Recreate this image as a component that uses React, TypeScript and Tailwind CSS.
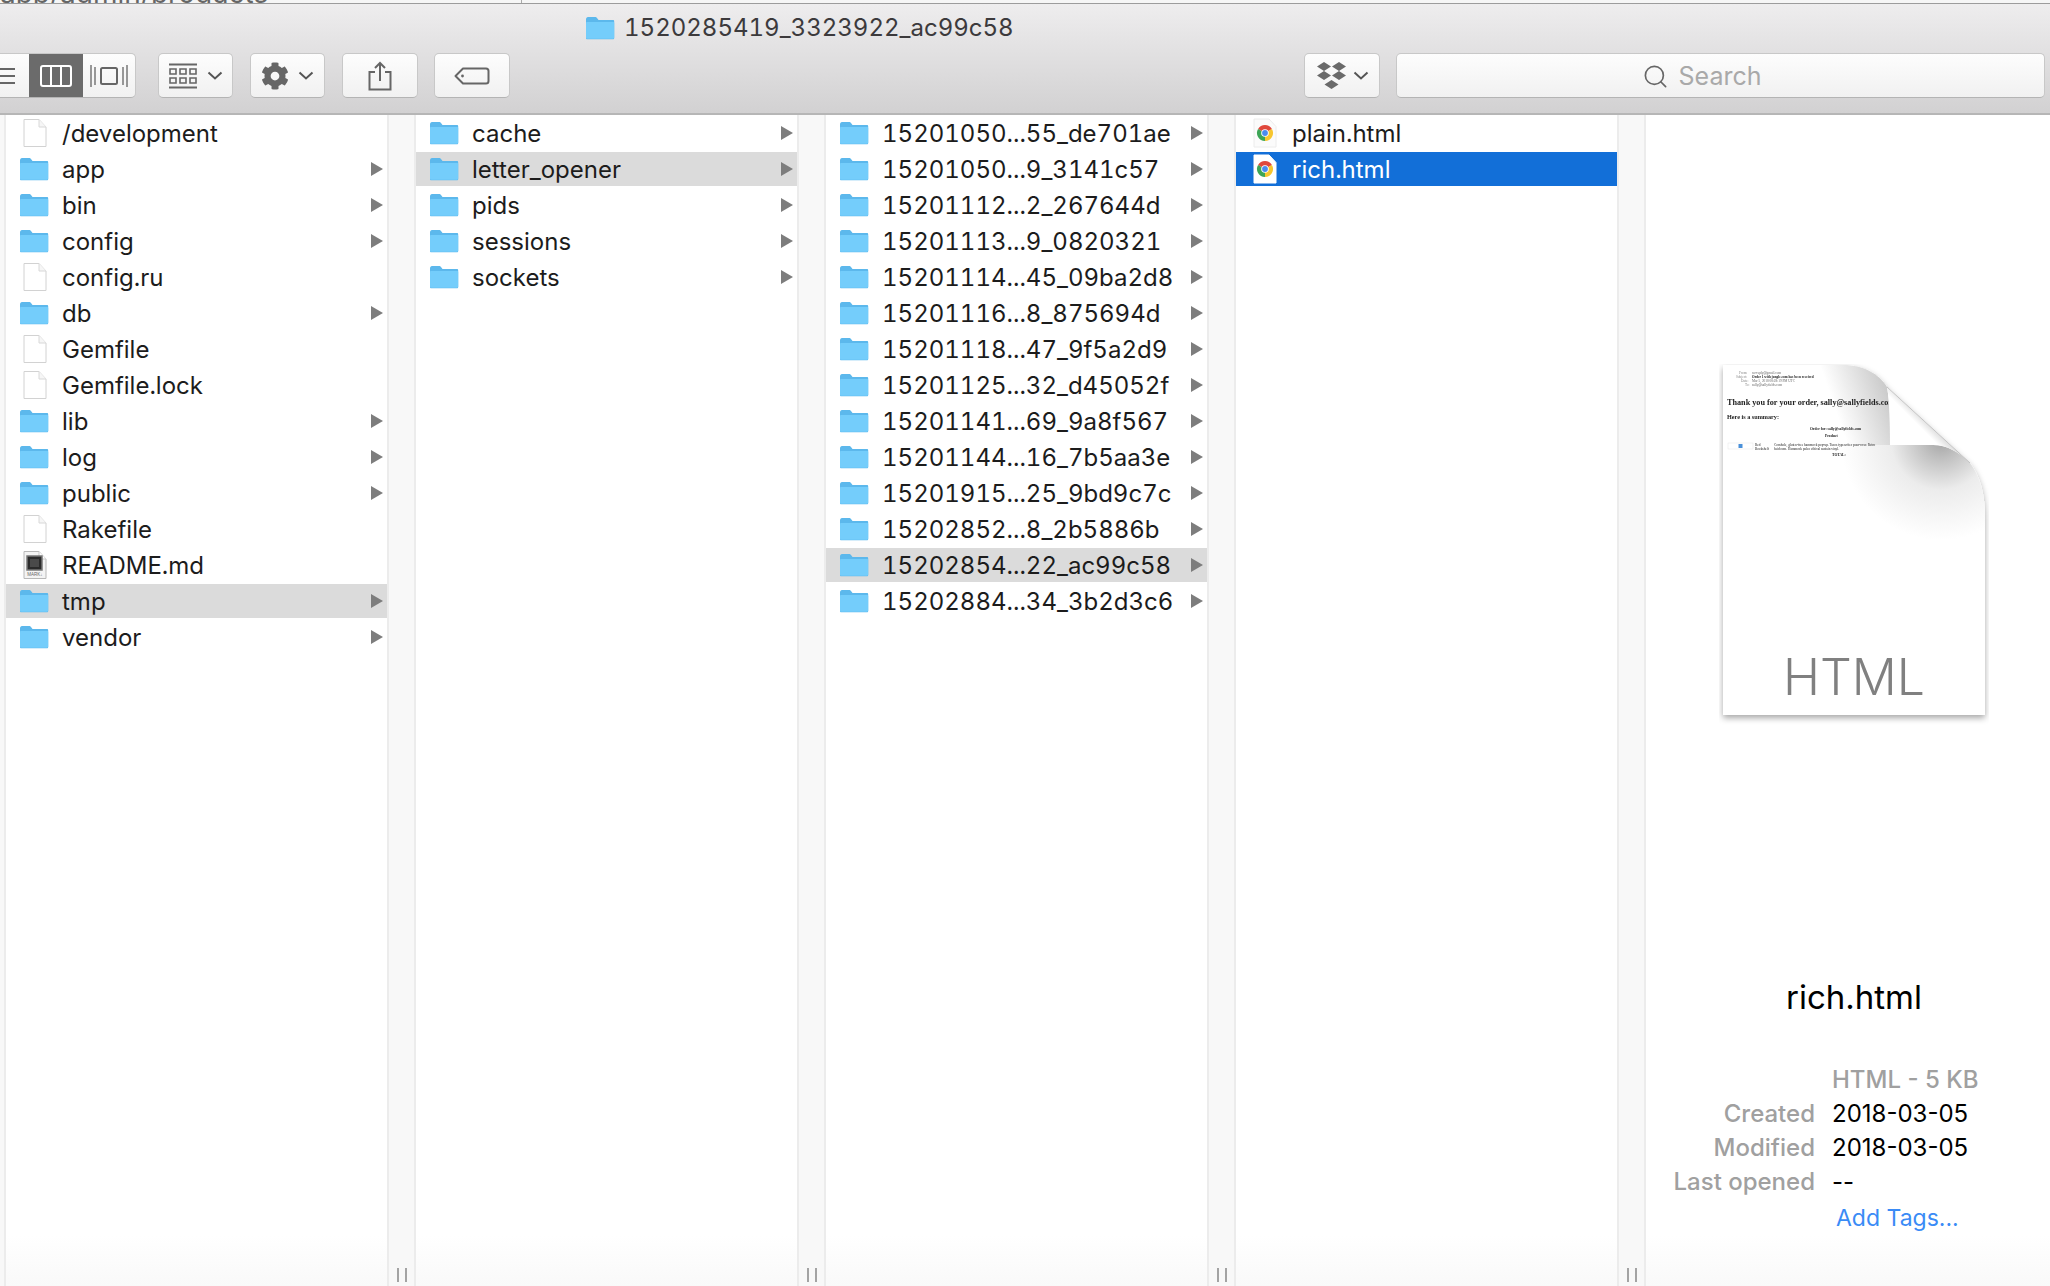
import type { ReactNode } from "react";
import { Search } from "lucide-react";
import { FaCog } from "react-icons/fa";

type Kind = "folder" | "file" | "readme" | "chrome";

interface Entry {
  name: string;
  kind: Kind;
  active?: "gray" | "blue";
}

const COL_ROOT: Entry[] = [
  { name: "/development", kind: "file" },
  { name: "app", kind: "folder" },
  { name: "bin", kind: "folder" },
  { name: "config", kind: "folder" },
  { name: "config.ru", kind: "file" },
  { name: "db", kind: "folder" },
  { name: "Gemfile", kind: "file" },
  { name: "Gemfile.lock", kind: "file" },
  { name: "lib", kind: "folder" },
  { name: "log", kind: "folder" },
  { name: "public", kind: "folder" },
  { name: "Rakefile", kind: "file" },
  { name: "README.md", kind: "readme" },
  { name: "tmp", kind: "folder", active: "gray" },
  { name: "vendor", kind: "folder" },
];

const COL_TMP: Entry[] = [
  { name: "cache", kind: "folder" },
  { name: "letter_opener", kind: "folder", active: "gray" },
  { name: "pids", kind: "folder" },
  { name: "sessions", kind: "folder" },
  { name: "sockets", kind: "folder" },
];

const COL_LETTERS: Entry[] = [
  { name: "15201050...55_de701ae", kind: "folder" },
  { name: "15201050...9_3141c57", kind: "folder" },
  { name: "15201112...2_267644d", kind: "folder" },
  { name: "15201113...9_0820321", kind: "folder" },
  { name: "15201114...45_09ba2d8", kind: "folder" },
  { name: "15201116...8_875694d", kind: "folder" },
  { name: "15201118...47_9f5a2d9", kind: "folder" },
  { name: "15201125...32_d45052f", kind: "folder" },
  { name: "15201141...69_9a8f567", kind: "folder" },
  { name: "15201144...16_7b5aa3e", kind: "folder" },
  { name: "15201915...25_9bd9c7c", kind: "folder" },
  { name: "15202852...8_2b5886b", kind: "folder" },
  { name: "15202854...22_ac99c58", kind: "folder", active: "gray" },
  { name: "15202884...34_3b2d3c6", kind: "folder" },
];

const COL_FILES: Entry[] = [
  { name: "plain.html", kind: "chrome" },
  { name: "rich.html", kind: "chrome", active: "blue" },
];

function FolderIcon({ className }: { className?: string }) {
  return (
    <svg viewBox="0 0 30 24" className={className}>
      <path d="M1 3.5C1 2 1.8 1 3 1h7c1 0 1.6.5 2.2 1.2L13.5 4H28c.7 0 1.2.5 1.2 1.2V22c0 .8-.5 1.3-1.2 1.3H2.2C1.5 23.3 1 22.8 1 22Z" fill="#5cb8ec" />
      <path d="M1 7.2C1 6.5 1.5 6 2.2 6H28c.7 0 1.2.5 1.2 1.2V21.5c0 .7-.5 1.2-1.2 1.2H2.2c-.7 0-1.2-.5-1.2-1.2Z" fill="#74cdfb" />
    </svg>
  );
}

function FileIcon() {
  return (
    <svg viewBox="0 0 24 30" className="w-6 h-[30px] shrink-0">
      <path d="M1 1.5h15l7 7.5v19.5H1Z" fill="#fff" stroke="#d2d2d2" strokeWidth="1" strokeLinejoin="round" />
      <path d="M16 1.5V9h7" fill="#f6f6f6" stroke="#d8d8d8" strokeWidth="1" />
    </svg>
  );
}

function ReadmeIcon() {
  return (
    <svg viewBox="0 0 24 30" className="w-6 h-[30px] shrink-0">
      <path d="M1 1.5h15l7 7.5v19.5H1Z" fill="#f4f4f4" stroke="#b8b8b8" strokeWidth="1" />
      <path d="M16 1.5V9h7" fill="#fff" stroke="#c8c8c8" strokeWidth="1" />
      <rect x="4" y="6" width="15" height="14" fill="#2b2b2b" stroke="#777" strokeWidth="1.5" />
      <rect x="7" y="9" width="9" height="8" fill="#4a4a4a" />
      <text x="12" y="26" textAnchor="middle" fontSize="4.5" fill="#666" fontFamily="Liberation Sans, sans-serif">MARK↓</text>
    </svg>
  );
}

function ChromeIcon({ selected }: { selected?: boolean }) {
  return (
    <svg viewBox="0 0 24 30" className="w-6 h-[30px] shrink-0">
      <path d="M1 1h15l7 7.5V29H1Z" fill={selected ? "#fff" : "#fbfbfb"} stroke={selected ? "#fff" : "#ececec"} strokeWidth="1" />
      <g transform="translate(12 15)">
        <path d="M0-8A8 8 0 0 1 6.93-4L0 0-6.93-4A8 8 0 0 1 0-8Z" fill="#e0483c" />
        <path d="M6.93-4A8 8 0 0 1 0 8L0 0Z" fill="#f7c62f" />
        <path d="M0 8A8 8 0 0 1-6.93-4L0 0Z" fill="#3da556" />
        <circle r="3.8" fill="#fff" />
        <circle r="2.9" fill="#4a8bf0" />
      </g>
    </svg>
  );
}

function Arrow() {
  return (
    <svg viewBox="0 0 12 14" className="w-3 h-3.5 shrink-0">
      <path d="M0 0 12 7 0 14Z" fill="#7d7d7d" />
    </svg>
  );
}

function Row({ entry }: { entry: Entry }) {
  const bg =
    entry.active === "blue"
      ? "bg-[#126fd8] text-white"
      : entry.active === "gray"
        ? "bg-[#dbdbdb] text-[#1c1c1c]"
        : "text-[#1c1c1c]";
  const isFolder = entry.kind === "folder";

  return (
    <div className={`flex items-center h-[34px] pr-[4px] ${bg}`}>
      <div className="w-[56px] shrink-0 flex justify-center pl-[2px]">
        {isFolder && <FolderIcon className="w-[30px] h-6 shrink-0 ml-[-2px]" />}
        {entry.kind === "file" && <FileIcon />}
        {entry.kind === "readme" && <ReadmeIcon />}
        {entry.kind === "chrome" && <ChromeIcon selected={entry.active === "blue"} />}
      </div>
      <span className="flex-1 pt-[1px] text-[24px] leading-none whitespace-nowrap tabular-nums">{entry.name}</span>
      {isFolder && <Arrow />}
    </div>
  );
}

function Column({ items }: { items: Entry[] }) {
  return (
    <div className="w-[381px] shrink-0 flex flex-col gap-[2px] pt-[1px] bg-[linear-gradient(to_bottom,#ffffff_calc(100%-50px),#f9f9f9)]">
      {items.map((item) => (
        <Row key={item.name} entry={item} />
      ))}
    </div>
  );
}

function Gutter() {
  return (
    <div className="w-[29px] shrink-0 flex items-end justify-center gap-[6px] pb-[4px] bg-[#f8f8f8] border-x-2 border-[#ececec]">
      <div className="w-[2px] h-[14px] bg-[#a3a3a3]" />
      <div className="w-[2px] h-[14px] bg-[#a3a3a3]" />
    </div>
  );
}

function ToolButton({ children, className }: { children: ReactNode; className?: string }) {
  return (
    <div className={`h-[45px] flex items-center justify-center rounded-[5px] bg-[linear-gradient(to_bottom,#fdfdfd,#f1f1f1)] border border-[#c8c8c8] border-b-[#b4b4b4] ${className ?? ""}`}>
      {children}
    </div>
  );
}

function Chevron() {
  return (
    <svg viewBox="0 0 16 9" className="w-4 h-[9px]">
      <path d="M1.5 1.5 8 7.5l6.5-6" fill="none" stroke="#555" strokeWidth="2" />
    </svg>
  );
}

function Toolbar() {
  return (
    <div className="h-[112px] shrink-0 flex flex-col bg-[linear-gradient(to_bottom,#eeedee,#d2d1d2)] border-t border-[#9c9c9c] border-b-2 border-b-[#b6b6b6]">
      <div className="h-[49px] shrink-0 flex items-center pl-[585px] gap-[9px] pb-[1px]">
        <FolderIcon className="w-[30px] h-6 shrink-0" />
        <span className="text-[24px] leading-none text-[#3c3a3c] tabular-nums">1520285419_3323922_ac99c58</span>
      </div>
      <div className="flex items-center ml-[-26px] pr-[5px]">
        <ToolButton className="w-[162px] justify-start overflow-hidden mr-[22px]">
          <div className="w-[54px] h-full flex items-center justify-end pr-[14px]">
            <svg viewBox="0 0 20 20" className="w-5 h-5">
              <path d="M0 3h20M0 10h20M0 17h20" stroke="#666" strokeWidth="2" />
            </svg>
          </div>
          <div className="w-[54px] h-full bg-[#6b6b6b] flex items-center justify-center">
            <svg viewBox="0 0 32 22" className="w-8 h-[22px]">
              <rect x="1" y="1" width="30" height="20" rx="2" fill="none" stroke="#fff" strokeWidth="2" />
              <path d="M11 1v20M21 1v20" stroke="#fff" strokeWidth="2" />
            </svg>
          </div>
          <div className="flex-1 flex items-center justify-center">
            <svg viewBox="0 0 38 24" className="w-[38px] h-6">
              <rect x="11" y="4" width="16" height="16" rx="1.5" fill="none" stroke="#666" strokeWidth="2" />
              <path d="M1 1v22M5 3v18M33 3v18M37 1v22" stroke="#777" strokeWidth="1.5" />
            </svg>
          </div>
        </ToolButton>
        <ToolButton className="w-[75px] gap-[10px] mr-[17px]">
          <svg viewBox="0 0 28 26" className="w-7 h-[26px]">
            <path d="M0 1.5h28M0 24.5h28" stroke="#666" strokeWidth="2" />
            <path d="M1 6h6v5H1ZM11 6h6v5h-6ZM21 6h6v5h-6ZM1 15h6v5H1ZM11 15h6v5h-6ZM21 15h6v5h-6Z" fill="none" stroke="#666" strokeWidth="1.6" />
          </svg>
          <Chevron />
        </ToolButton>
        <ToolButton className="w-[75px] gap-[9px] mr-[17px]">
          <FaCog className="w-[28px] h-[28px] text-[#666]" />
          <Chevron />
        </ToolButton>
        <ToolButton className="w-[76px] mr-[16px]">
          <svg viewBox="0 0 24 30" className="w-6 h-[30px]">
            <path d="M7 11H1.5v17.5h21V11H17" fill="none" stroke="#666" strokeWidth="2" />
            <path d="M12 20V2M7 7l5-5 5 5" fill="none" stroke="#666" strokeWidth="2" />
          </svg>
        </ToolButton>
        <ToolButton className="w-[76px]">
          <svg viewBox="0 0 36 18" className="w-9 h-[18px]">
            <path d="M9 1.5h23c1.5 0 2.5 1 2.5 2.5v10c0 1.5-1 2.5-2.5 2.5H9L1.5 9Z" fill="none" stroke="#666" strokeWidth="2" strokeLinejoin="round" />
            <circle cx="8.5" cy="9" r="1.4" fill="#666" />
          </svg>
        </ToolButton>
        <div className="flex-1" />
        <ToolButton className="w-[76px] gap-[6px] mr-[16px]">
          <svg viewBox="0 0 31 27" className="w-[31px] h-[27px]">
            <path d="M8 0l7 4.5-7 4.5-7-4.5ZM23 0l7 4.5-7 4.5-7-4.5ZM8 9l7 4.5L8 18l-7-4.5ZM23 9l7 4.5-7 4.5-7-4.5ZM15.5 18l7 4.5-7 4.5-7-4.5Z" fill="#6a6a6a" />
          </svg>
          <Chevron />
        </ToolButton>
        <ToolButton className="w-[649px] gap-[10px] pr-[38px] pt-[2px]">
          <Search className="w-[27px] h-[27px] text-[#666]" strokeWidth={1.5} />
          <span className="text-[25px] leading-none text-[#a9a9a9]">Search</span>
        </ToolButton>
      </div>
    </div>
  );
}

function DocumentIcon() {
  return (
    <svg viewBox="0 0 270 362" className="w-[270px] h-[362px] shrink-0">
      <defs>
        <linearGradient id="topShade" gradientUnits="userSpaceOnUse" x1="175" y1="30" x2="118" y2="50">
          <stop offset="0" stopColor="#c6c6c6" />
          <stop offset="1" stopColor="#ffffff" />
        </linearGradient>
        <radialGradient id="curlShade" gradientUnits="userSpaceOnUse" cx="222" cy="76" r="100">
          <stop offset="0" stopColor="#a4a4a4" />
          <stop offset="0.2" stopColor="#c2c2c2" />
          <stop offset="0.5" stopColor="#ececec" />
          <stop offset="1" stopColor="#ffffff" />
        </radialGradient>
        <linearGradient id="flapShade" gradientUnits="userSpaceOnUse" x1="214" y1="58" x2="196" y2="76">
          <stop offset="0" stopColor="#d0d0d0" />
          <stop offset="0.5" stopColor="#ffffff" />
        </linearGradient>
        <clipPath id="printArea">
          <path d="M4 1H124C145 1 160 10 168 23C171 40 171 60 171 81V100H4Z" />
        </clipPath>
        <clipPath id="belowCurl">
          <path d="M100 81H214C228 81 240 88 251 99C261 112 266 130 266 153V220H100Z" />
        </clipPath>
        <filter id="pageShadow" x="-10%" y="-10%" width="120%" height="120%">
          <feDropShadow dx="0" dy="3" stdDeviation="3" floodColor="#000" floodOpacity="0.35" />
        </filter>
        <filter id="soft">
          <feGaussianBlur stdDeviation="0.35" />
        </filter>
      </defs>
      <path
        d="M4 1H124C145 1 160 10 168 23L251 99C261 112 266 130 266 153V351H4Z"
        fill="#fff"
        filter="url(#pageShadow)"
      />
      <path d="M4 1H124C145 1 160 10 168 23C171 40 171 60 171 81H4Z" fill="url(#topShade)" />
      <path d="M100 81H270V220H100Z" fill="url(#curlShade)" clipPath="url(#belowCurl)" />
      <g clipPath="url(#printArea)">
        <g filter="url(#soft)" fontFamily="Liberation Serif, serif" fill="#222">
          <text x="33" y="10" fontSize="3.4" fill="#666">no-reply@gmail.com</text>
          <text x="33" y="14" fontSize="3.4" fontWeight="700">Order 1 with jungle.com has been received</text>
          <text x="33" y="18" fontSize="3.4" fill="#666">Mar 5, 2018 08:28:19 PM UTC</text>
          <text x="33" y="22" fontSize="3.4" fill="#666">sally@sallyfields.com</text>
          <text x="20" y="10" fontSize="3.4" fill="#888">From:</text>
          <text x="17" y="14" fontSize="3.4" fill="#888">Subject:</text>
          <text x="22" y="18" fontSize="3.4" fill="#888">Date:</text>
          <text x="26" y="22" fontSize="3.4" fill="#888">To:</text>
          <text x="8" y="41" fontSize="8.2" fontWeight="700">Thank you for your order, sally@sallyfields.com</text>
          <text x="8" y="55" fontSize="6.2" fontWeight="700">Here is a summary:</text>
          <text x="91" y="66" fontSize="3.7" fontWeight="700">Order for: sally@sallyfields.com</text>
          <text x="106" y="73" fontSize="3.7" fontWeight="700">Product</text>
          <rect x="9" y="79" width="25" height="6" fill="#fff" stroke="#e6e6e6" strokeWidth="0.5" />
          <rect x="19.5" y="80" width="4" height="4" fill="#4a90d9" />
          <text x="36" y="81.5" fontSize="3.4">Red</text>
          <text x="36" y="86" fontSize="3.4">Bookshelf</text>
          <text x="55" y="81.5" fontSize="3.4">Cornhole, gluten-free hammock pop-up. Tacos typewriter pour-over. Retro</text>
          <text x="55" y="86" fontSize="3.4">heirloom. Hammock paleo ethical sustain vinyl.</text>
          <text x="113" y="92" fontSize="3.7" fontWeight="700">TOTAL:</text>
        </g>
      </g>
      <path d="M168 23L251 99C240 88 228 81 214 81H171C171 60 171 40 168 23Z" fill="url(#flapShade)" />
      <path d="M168 23L251 99" fill="none" stroke="#c4c4c4" strokeWidth="1" />
      <text x="135" y="331" textAnchor="middle" fontSize="50" fill="#808080" fontFamily="Inter, sans-serif" fontWeight="300">HTML</text>
    </svg>
  );
}

function InfoRow({ label, value, valueClass }: { label?: string; value: string; valueClass?: string }) {
  return (
    <div className="flex h-[34px] items-center text-[24px] leading-none">
      <span className="w-[169px] shrink-0 text-right text-[#a0a0a0] font-medium">{label}</span>
      <span className={`whitespace-nowrap ${valueClass ?? "pl-[17px] text-black"}`}>{value}</span>
    </div>
  );
}

function Preview() {
  return (
    <div className="flex-1 flex flex-col bg-[linear-gradient(to_bottom,#ffffff_calc(100%-50px),#f9f9f9)]">
      <div className="pl-[73px] pt-[249px]">
        <DocumentIcon />
      </div>
      <div className="pl-[140px] mt-[255px] text-[33px] leading-none text-black whitespace-nowrap">rich.html</div>
      <div className="mt-[49px]">
        <InfoRow value="HTML - 5 KB" valueClass="pl-[17px] text-[#a0a0a0] font-medium" />
        <InfoRow label="Created" value="2018-03-05" />
        <InfoRow label="Modified" value="2018-03-05" />
        <InfoRow label="Last opened" value="--" />
        <InfoRow value="Add Tags..." valueClass="text-[#3a8bf6] pl-[21px] mt-[4px] text-[23px]" />
      </div>
    </div>
  );
}

export default function App() {
  return (
    <div className="w-[2050px] h-screen flex flex-col overflow-hidden bg-white font-['Inter','Liberation_Sans',sans-serif]">
      <div className="h-[3px] shrink-0 overflow-hidden bg-[#f6f6f6] flex">
        <span className="w-[522px] shrink-0 border-r border-[#aaa] text-[28px] leading-none text-[#666] mt-[-21px] whitespace-nowrap">
          app/admin/products
        </span>
      </div>
      <Toolbar />
      <div className="flex-1 flex min-h-0">
        <div className="w-[6px] shrink-0 bg-[#f8f8f8] border-r-2 border-[#ececec]" />
        <Column items={COL_ROOT} />
        <Gutter />
        <Column items={COL_TMP} />
        <Gutter />
        <Column items={COL_LETTERS} />
        <Gutter />
        <Column items={COL_FILES} />
        <Gutter />
        <Preview />
      </div>
    </div>
  );
}
